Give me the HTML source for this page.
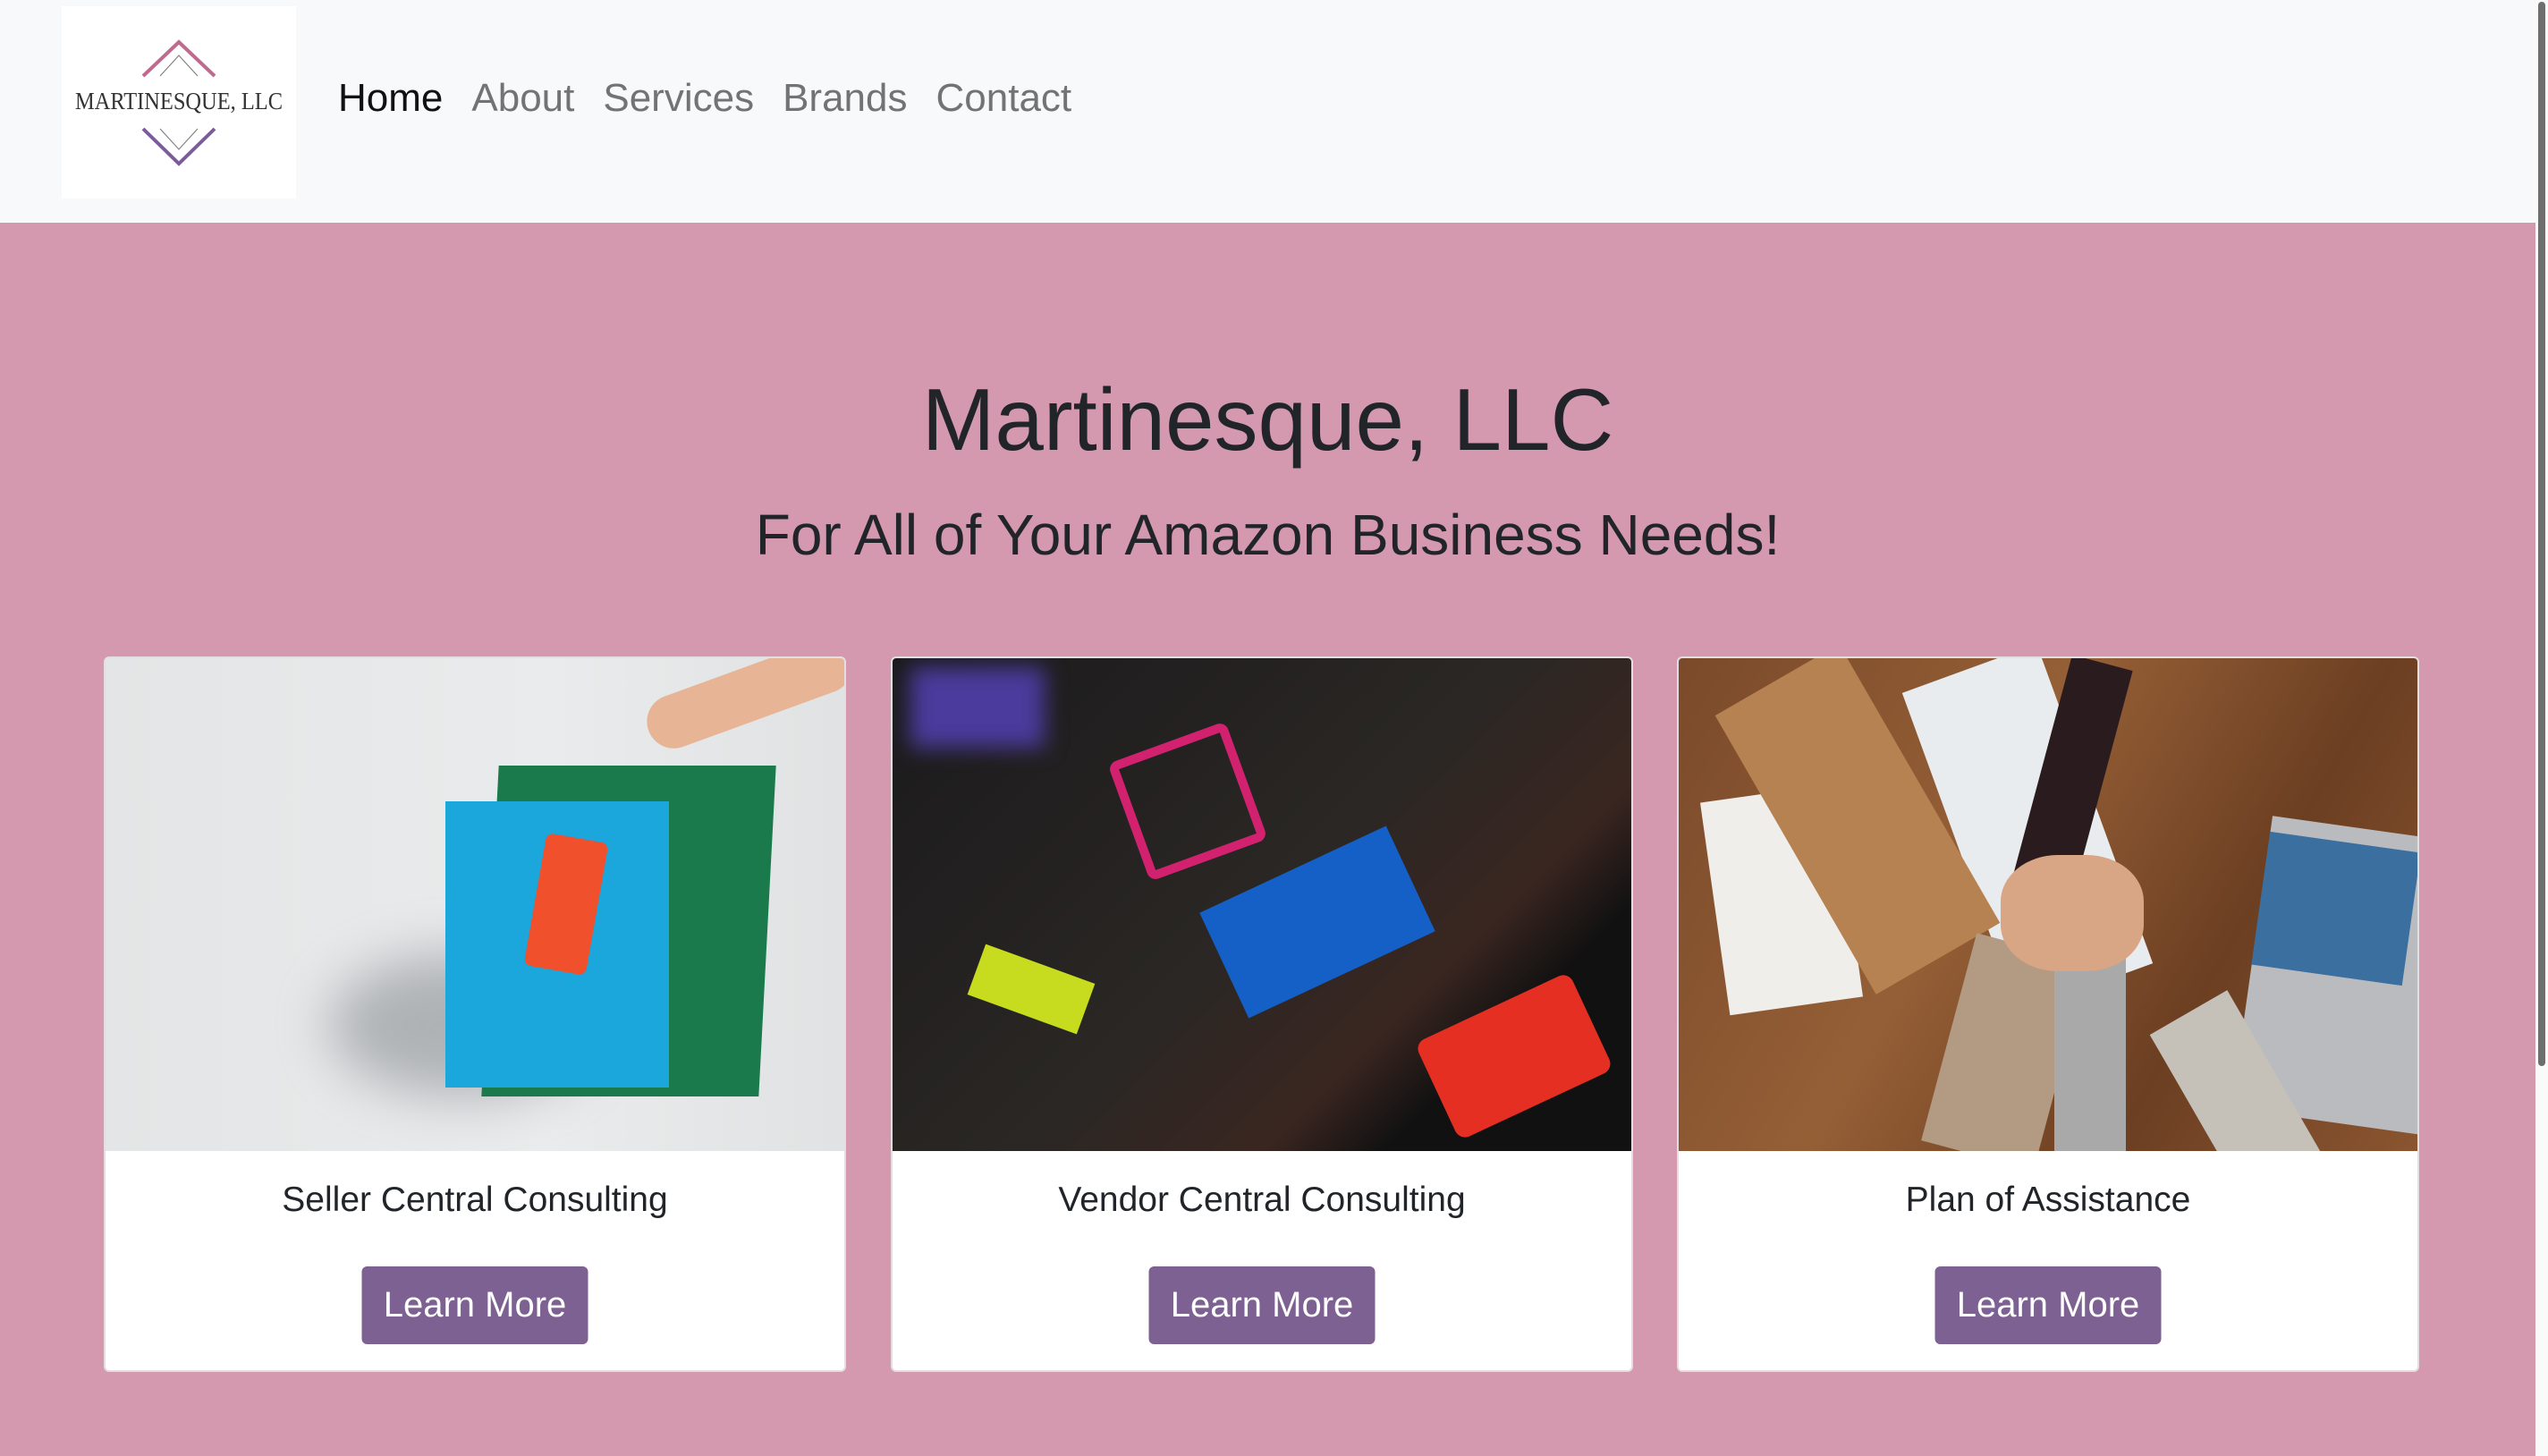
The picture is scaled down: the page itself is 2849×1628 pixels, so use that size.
<!DOCTYPE html>
<html><head><meta charset="utf-8"><style>
*{margin:0;padding:0;box-sizing:border-box}
body{width:2849px;height:1628px;overflow:hidden;background:#d499ae;font-family:"Liberation Sans",Arial,sans-serif;position:relative}
.hdr{position:absolute;left:0;top:0;width:2835px;height:249px;background:#f8f9fa}
.logo{position:absolute;left:69px;top:7px;width:262px;height:215px;background:#fff}
.nav{position:absolute;left:378px;top:85px;font-size:44px;color:#737373;white-space:nowrap}
.nav span{margin-right:32px}
.nav .a{color:#111}
h1{position:absolute;left:0;width:2835px;top:416px;text-align:center;font-size:98px;font-weight:normal;color:#212529;line-height:1.1}
h2{position:absolute;left:0;width:2835px;top:560px;text-align:center;font-size:64px;font-weight:normal;color:#212529;line-height:1.2}
.card{position:absolute;top:734px;width:830px;height:800px;background:#fff;border:2px solid #e6dde1;border-radius:6px;overflow:hidden}
.img{position:absolute;left:0;top:0;width:100%;height:551px;overflow:hidden}
.ct{position:absolute;top:584px;width:100%;text-align:center;font-size:39px;color:#212529}
.btn{position:absolute;top:680px;left:50%;transform:translateX(-50%);width:253px;height:87px;background:#7d6192;border-radius:6px;color:#fff;font-size:40px;text-align:center;line-height:87px}
.sb{position:absolute;left:2835px;top:0;width:14px;height:1628px;background:#fafafa}
.sb i{position:absolute;left:3px;top:2px;width:8px;height:1190px;background:#6e6e6e;border-radius:4px}
.ab{position:absolute}
</style></head><body>
<div class="hdr">
<div class="logo">
<svg width="262" height="215" viewBox="0 0 262 215">
<polyline points="91,78 131,40 171,78" fill="none" stroke="#c06a8e" stroke-width="4"/>
<polyline points="110,78 131,55 152,78" fill="none" stroke="#777" stroke-width="1"/>
<polyline points="91,137 131,176 171,137" fill="none" stroke="#7d5a9a" stroke-width="4"/>
<polyline points="110,137 131,160 152,137" fill="none" stroke="#777" stroke-width="1"/>
<text x="131" y="115" text-anchor="middle" font-family="Liberation Serif,serif" font-size="27" fill="#333" textLength="232" lengthAdjust="spacingAndGlyphs">MARTINESQUE, LLC</text>
</svg></div>
<div class="nav"><span class="a">Home</span><span>About</span><span>Services</span><span>Brands</span><span>Contact</span></div>
</div>
<h1>Martinesque, LLC</h1>
<h2>For All of Your Amazon Business Needs!</h2>

<div class="card" style="left:116px">
<div class="img" style="background:linear-gradient(90deg,#e3e5e6,#e9ebec 60%,#e0e2e3)">
<div class="ab" style="left:250px;top:330px;width:300px;height:160px;background:#8a8e92;border-radius:50%;filter:blur(30px);opacity:.6"></div>
<div class="ab" style="left:430px;top:120px;width:310px;height:370px;background:#1b7a4c;transform:skewX(-3deg)"></div>
<div class="ab" style="left:430px;top:280px;width:190px;height:170px;background:#45c35e"></div>
<div class="ab" style="left:380px;top:160px;width:250px;height:320px;background:#1ba6dc"></div>
<div class="ab" style="left:480px;top:200px;width:70px;height:150px;background:#f0502b;transform:rotate(10deg);border-radius:8px"></div>
<div class="ab" style="left:600px;top:10px;width:240px;height:60px;background:#e7b596;border-radius:30px;transform:rotate(-20deg)"></div>
</div>
<div class="ct">Seller Central Consulting</div><div class="btn">Learn More</div></div>

<div class="card" style="left:996px">
<div class="img" style="background:linear-gradient(135deg,#1b1a1c,#2a2724 50%,#3a2620 70%,#111 80%)">
<div class="ab" style="left:260px;top:90px;width:140px;height:140px;border:10px solid #d2226f;transform:rotate(-20deg);border-radius:10px"></div>
<div class="ab" style="left:360px;top:230px;width:230px;height:130px;background:#1560c7;transform:rotate(-25deg)"></div>
<div class="ab" style="left:600px;top:385px;width:190px;height:120px;background:#e42f22;transform:rotate(-25deg);border-radius:12px"></div>
<div class="ab" style="left:90px;top:340px;width:130px;height:60px;background:#c7dc1f;transform:rotate(20deg)"></div>
<div class="ab" style="left:20px;top:10px;width:150px;height:90px;background:#4a3b9c;filter:blur(12px)"></div>
</div>
<div class="ct">Vendor Central Consulting</div><div class="btn">Learn More</div></div>

<div class="card" style="left:1875px">
<div class="img" style="background:linear-gradient(120deg,#7a4a2a,#955f36 40%,#6c3f22 70%,#8a5530)">
<div class="ab" style="left:40px;top:150px;width:150px;height:240px;background:#efeeea;transform:rotate(-8deg)"></div>
<div class="ab" style="left:310px;top:0px;width:160px;height:380px;background:#e9ecef;transform:rotate(-20deg)"></div>
<div class="ab" style="left:640px;top:190px;width:220px;height:330px;background:#b9bbbe;transform:rotate(8deg)"></div>
<div class="ab" style="left:650px;top:205px;width:170px;height:150px;background:#3a6fa0;transform:rotate(8deg)"></div>
<div class="ab" style="left:120px;top:0;width:160px;height:360px;background:#b68252;transform:rotate(-30deg)"></div>
<div class="ab" style="left:400px;top:0;width:70px;height:300px;background:#2a1c1e;transform:rotate(15deg)"></div>
<div class="ab" style="left:300px;top:320px;width:130px;height:240px;background:#b39a82;transform:rotate(15deg)"></div>
<div class="ab" style="left:420px;top:330px;width:80px;height:240px;background:#a9a9a9"></div>
<div class="ab" style="left:580px;top:380px;width:100px;height:240px;background:#c6c1b8;transform:rotate(-30deg)"></div>
<div class="ab" style="left:360px;top:220px;width:160px;height:130px;background:#d8a585;border-radius:40%"></div>
</div>
<div class="ct">Plan of Assistance</div><div class="btn">Learn More</div></div>
<div class="sb"><i></i></div>
</body></html>
